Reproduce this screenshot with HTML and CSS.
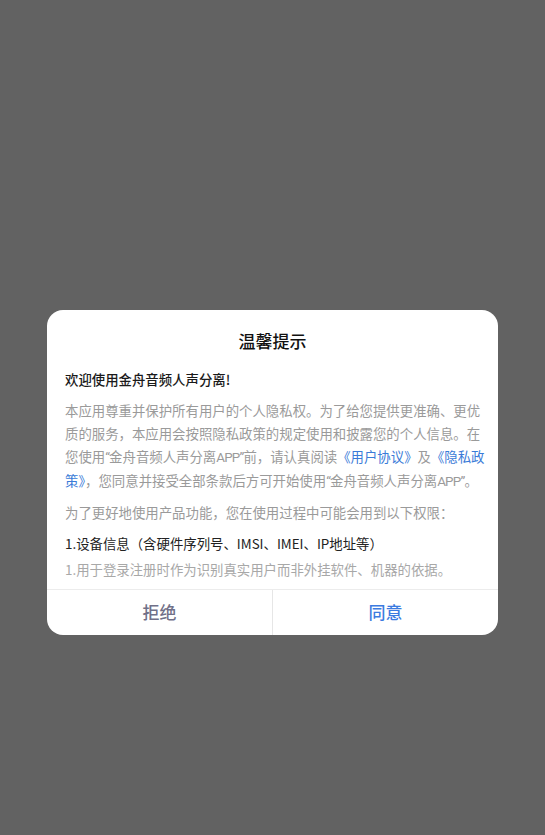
FILE: index.html
```html
<!DOCTYPE html>
<html lang="zh-CN">
<head>
<meta charset="utf-8">
<title>温馨提示</title>
<link rel="stylesheet" href="styles.css">
</head>
<body>
<div class="overlay">
  <div class="dialog">
    <h2 class="title">温馨提示</h2>
    <div class="scroll">
      <p class="welcome">欢迎使用金舟音频人声分离!</p>
      <p class="para">本应用尊重并保护所有用户的个人隐私权。为了给您提供更准确、更优质的服务，本应用会按照隐私政策的规定使用和披露您的个人信息。在您使用<span class="en">“</span>金舟音频人声分离<span class="en">APP”</span>前，请认真阅读<a class="link">《用户协议》</a>及<a class="link">《隐私政策》</a>，您同意并接受全部条款后方可开始使用<span class="en">“</span>金舟音频人声分离<span class="en">APP”</span>。</p>
      <p class="para">为了更好地使用产品功能，您在使用过程中可能会用到以下权限：</p>
      <p class="item">1.设备信息（含硬件序列号、IMSI、IMEI、IP地址等）</p>
      <p class="sub">1.用于登录注册时作为识别真实用户而非外挂软件、机器的依据。</p>
    </div>
    <div class="actions">
      <button class="btn reject">拒绝</button>
      <button class="btn agree">同意</button>
    </div>
  </div>
</div>
</body>
</html>
```
FILE: styles.css
```css
html, body {
  margin: 0;
  padding: 0;
  height: 100%;
}
body {
  background: #626262;
  font-family: "Noto Sans CJK SC", "Noto Sans", sans-serif;
}
.overlay {
  height: 100%;
  display: flex;
  flex-direction: column;
  align-items: center;
  padding-top: 310px;
  box-sizing: border-box;
}
.dialog {
  width: 451px;
  background: #fff;
  border-radius: 16px;
  overflow: hidden;
  display: flex;
  flex-direction: column;
}
.title {
  margin: 0;
  padding-top: 17px;
  height: 27px;
  line-height: 27px;
  text-align: center;
  font-size: 17px;
  font-weight: 500;
  color: #111;
}
.scroll {
  height: 235px;
  overflow: hidden;
  padding: 14px 11px 0 18px;
  box-sizing: border-box;
}
.scroll p {
  margin: 0;
  font-size: 13.4px;
  line-height: 23px;
}
.welcome {
  color: #1a1a1a;
  font-weight: 500;
  margin-bottom: 8px !important;
}
.para {
  color: #9a9a9a;
  margin-bottom: 8px !important;
}
.en {
  font-family: "Roboto", "Noto Sans", sans-serif;
  letter-spacing: -0.8px;
}
.link {
  color: #3a7bd8;
}
.item {
  color: #222;
  margin-bottom: 3px !important;
}
.sub {
  color: #a8a8a8;
}
.actions {
  display: flex;
  border-top: 1px solid #ececec;
  height: 45px;
}
.btn {
  flex: 1;
  border: 0;
  background: transparent;
  font-family: inherit;
  font-size: 17px;
  font-weight: 500;
  padding: 0 0 3px;
}
.reject {
  color: #707088;
  border-right: 1px solid #e6e6e6;
}
.agree {
  color: #3c7be0;
}
```
